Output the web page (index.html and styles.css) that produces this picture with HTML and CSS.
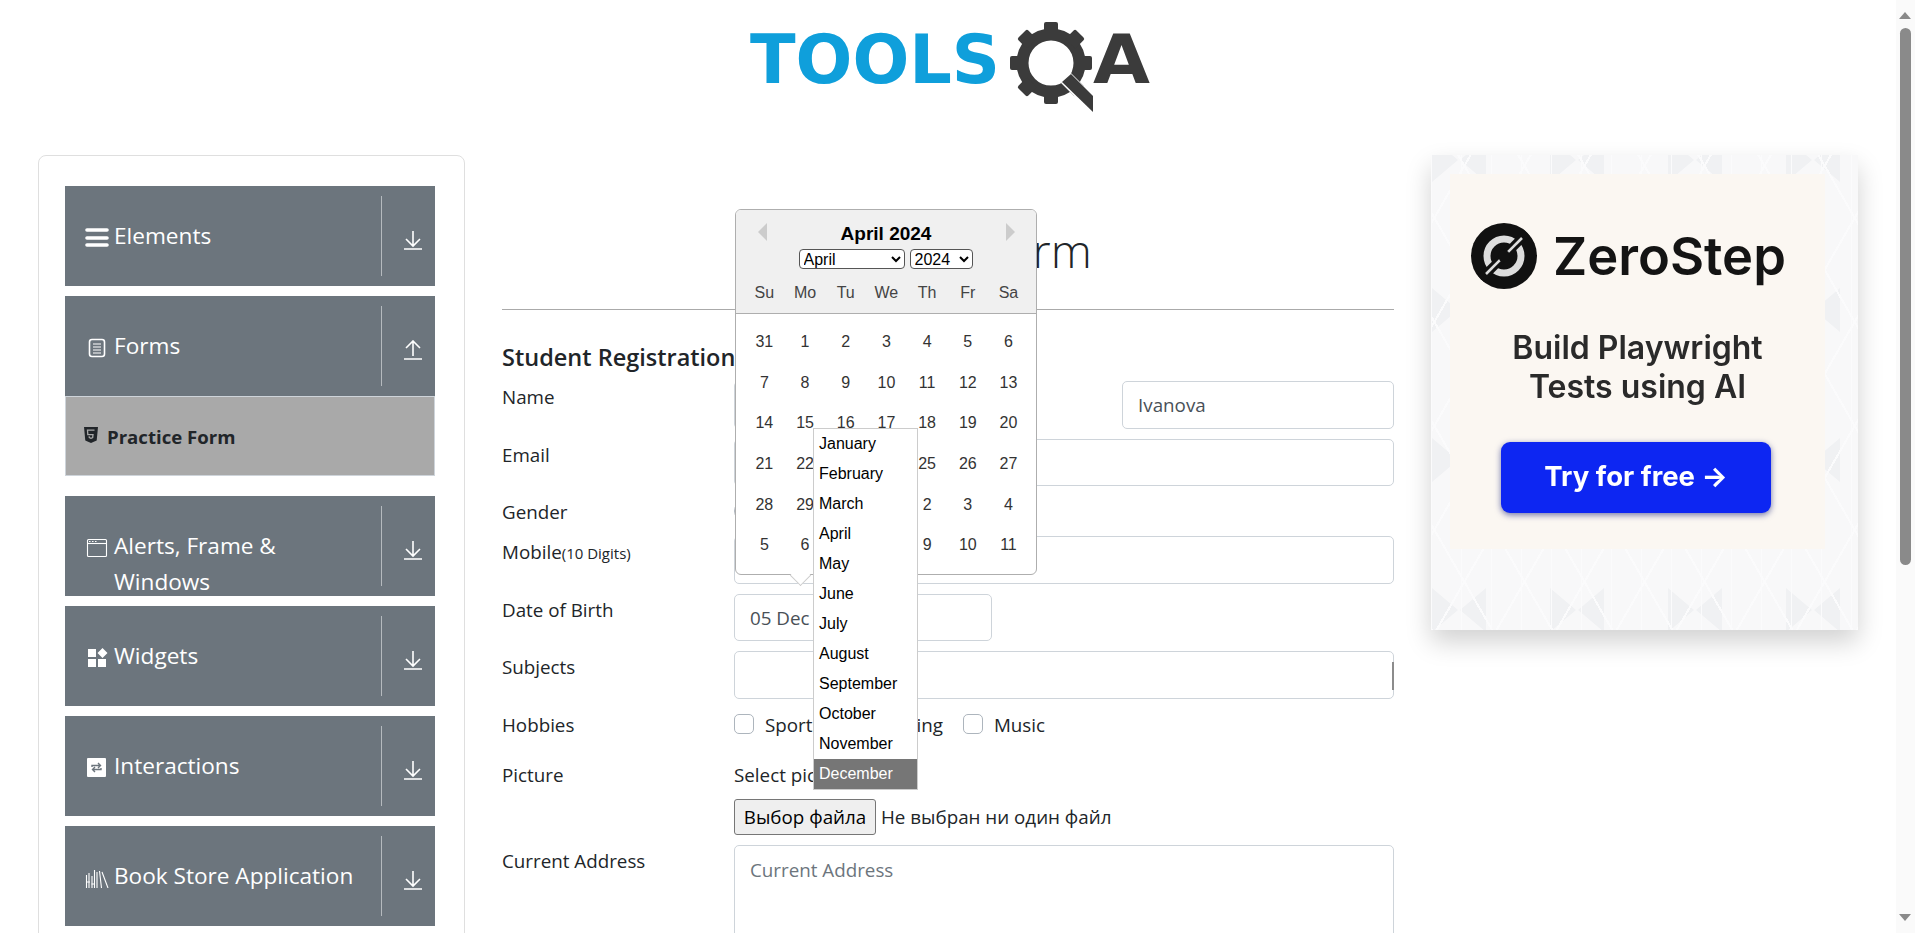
FILE: index.html
```html
<!DOCTYPE html>
<html lang="en">
  <head>
    <meta charset="UTF-8" />
    <meta name="viewport" content="width=device-width, initial-scale=1.0" />
    <title>ToolsQA</title>
    <link rel="stylesheet" href="styles.css">
  </head>
  <body>
    <div class="page">
      <header class="top">
        <svg class="logo" width="496" height="130" viewBox="0 0 496 130">
          <text class="logo-tools" x="50" y="83" textLength="250" lengthAdjust="spacingAndGlyphs">TOOLS</text>
          <g class="gear">
            <circle cx="351" cy="63" r="28.5" />
            <rect x="344" y="22" width="14" height="14" rx="2" />
            <rect x="344" y="22" width="14" height="14" rx="2" transform="rotate(45 351 63)" />
            <rect x="344" y="22" width="14" height="14" rx="2" transform="rotate(90 351 63)" />
            <rect x="344" y="22" width="14" height="14" rx="2" transform="rotate(135 351 63)" />
            <rect x="344" y="22" width="14" height="14" rx="2" transform="rotate(180 351 63)" />
            <rect x="344" y="22" width="14" height="14" rx="2" transform="rotate(225 351 63)" />
            <rect x="344" y="22" width="14" height="14" rx="2" transform="rotate(270 351 63)" />
            <rect x="344" y="22" width="14" height="14" rx="2" transform="rotate(315 351 63)" />
          </g>
          <path class="logo-cut" d="M366 78 L393 105" />
          <path class="logo-handle" d="M371 74 L393 96 L393 112 L362 82 Z" />
          <text class="logo-a" x="393" y="83" textLength="57" lengthAdjust="spacingAndGlyphs">A</text>
        </svg>
      </header>

      <div class="columns">
        <aside class="side">
          <div class="group">
            <div class="group-name">
              <svg class="ico" width="24" height="20" viewBox="0 0 24 20"><path class="ico-line thick" d="M2 2h20M2 10h20M2 17h20" /></svg>
              <span>Elements</span>
            </div>
            <div class="group-arrow"><svg width="18" height="20" viewBox="0 0 18 20"><path class="ico-line" d="M9 1v15M2 9l7 7 7-7M0 19h18" /></svg></div>
          </div>

          <div class="group">
            <div class="group-name">
              <svg class="ico" width="24" height="20" viewBox="0 0 24 20"><rect class="ico-line" x="4.5" y="1.5" width="15" height="17" rx="2.5" /><path class="ico-line thin" d="M8 6h8M8 9h8M8 12h8M8 15h8" /></svg>
              <span>Forms</span>
            </div>
            <div class="group-arrow"><svg width="18" height="20" viewBox="0 0 18 20"><path class="ico-line" d="M9 16V1M2 8l7-7 7 7M0 19h18" /></svg></div>
          </div>
          <div class="sub-item">
            <svg class="ico-sub" width="14" height="16" viewBox="0 0 14 16"><path d="M0 0h14l-1.3 13.6L7 16l-5.700-2.400z" fill="#212529" /><path d="M10.500 3.200H3.500l.3 4.400h5.200l-.3 3L7 11.300l-1.700-.7-.1-1.300" fill="none" stroke="#a9a9a9" stroke-width="1.300" /></svg>
            <span>Practice Form</span>
          </div>

          <div class="group group-after-sub">
            <div class="group-name">
              <svg class="ico" width="24" height="20" viewBox="0 0 24 20"><rect class="ico-line thin" x="2.500" y="1.500" width="19" height="17" rx="1" /><path class="ico-line thin" d="M2.500 5.500h19" /><path class="ico-line thin" d="M4 3.500h1.500M7 3.500h1.500M10 3.500h1.500" /></svg>
              <span>Alerts, Frame &amp; Windows</span>
            </div>
            <div class="group-arrow"><svg width="18" height="20" viewBox="0 0 18 20"><path class="ico-line" d="M9 1v15M2 9l7 7 7-7M0 19h18" /></svg></div>
          </div>

          <div class="group">
            <div class="group-name">
              <svg class="ico" width="24" height="20" viewBox="0 0 24 20"><path fill="#fff" d="M3 1h8v8H3zM3 11h8v8H3zM13 11h8v8h-8zM17.500 0l5 5-5 5-5-5z" /></svg>
              <span>Widgets</span>
            </div>
            <div class="group-arrow"><svg width="18" height="20" viewBox="0 0 18 20"><path class="ico-line" d="M9 1v15M2 9l7 7 7-7M0 19h18" /></svg></div>
          </div>

          <div class="group">
            <div class="group-name">
              <svg class="ico" width="24" height="20" viewBox="0 0 24 20"><rect x="2" y="0" width="19" height="19" rx="1" fill="#fff" /><path d="M7 9V7.500h8M13 5l2.500 2.500L13 10M16 10v1.500H8M10 9l-2.500 2.500L10 14" fill="none" stroke="#6c757d" stroke-width="1.400" /></svg>
              <span>Interactions</span>
            </div>
            <div class="group-arrow"><svg width="18" height="20" viewBox="0 0 18 20"><path class="ico-line" d="M9 1v15M2 9l7 7 7-7M0 19h18" /></svg></div>
          </div>

          <div class="group">
            <div class="group-name">
              <svg class="ico" width="24" height="20" viewBox="0 0 24 20"><path class="ico-line thin" d="M1.500 7v13M4 5v15M7 8v12M9.500 2v18M12 4v16M14.500 3l2 17M17 4l6 16" /><path class="ico-line thin" d="M1 14h4M6.500 16h3.500" /></svg>
              <span>Book Store Application</span>
            </div>
            <div class="group-arrow"><svg width="18" height="20" viewBox="0 0 18 20"><path class="ico-line" d="M9 1v15M2 9l7 7 7-7M0 19h18" /></svg></div>
          </div>
        </aside>

        <main class="main">
          <h1 class="title">Practice Form</h1>
          <hr class="rule" />
          <h5 class="form-title">Student Registration Form</h5>

          <div class="row">
            <label class="row-label">Name</label>
            <div class="row-ctrl split">
              <input class="field field-half" placeholder="First Name" />
              <input class="field field-half" value="Ivanova" />
            </div>
          </div>
          <div class="row">
            <label class="row-label">Email</label>
            <div class="row-ctrl"><input class="field" placeholder="name@example.com" /></div>
          </div>
          <div class="row row-gender">
            <label class="row-label">Gender</label>
            <div class="row-ctrl checks">
              <span class="radio"></span><span>Male</span>
              <span class="radio"></span><span>Female</span>
              <span class="radio"></span><span>Other</span>
            </div>
          </div>
          <div class="row">
            <label class="row-label">Mobile<small>(10 Digits)</small></label>
            <div class="row-ctrl"><input class="field" placeholder="Mobile Number" /></div>
          </div>
          <div class="row">
            <label class="row-label">Date of Birth</label>
            <div class="row-ctrl"><input class="field field-date" value="05 Dec 2024" /></div>
          </div>
          <div class="row">
            <label class="row-label">Subjects</label>
            <div class="row-ctrl subjects"><input class="field" /></div>
          </div>
          <div class="row row-hobbies">
            <label class="row-label">Hobbies</label>
            <div class="row-ctrl checks">
              <span class="check"></span><span>Sports</span>
              <span class="check"></span><span>Reading</span>
              <span class="check"></span><span>Music</span>
            </div>
          </div>
          <div class="row row-picture">
            <label class="row-label">Picture</label>
            <div class="row-ctrl">
              <div class="picture-text">Select picture</div>
              <div class="file-line">
                <button class="file-btn">Выбор файла</button>
                <span class="file-name">Не выбран ни один файл</span>
              </div>
            </div>
          </div>
          <div class="row">
            <label class="row-label">Current Address</label>
            <div class="row-ctrl"><textarea class="field field-area" placeholder="Current Address"></textarea></div>
          </div>

          <div class="cal">
            <div class="cal-head">
              <span class="cal-prev"></span>
              <span class="cal-next"></span>
              <div class="cal-month">April 2024</div>
              <div class="cal-selects">
                <select class="sel-month"><option>April</option></select>
                <select class="sel-year"><option>2024</option></select>
              </div>
              <div class="cal-names">
                <span>Su</span><span>Mo</span><span>Tu</span><span>We</span><span>Th</span><span>Fr</span><span>Sa</span>
              </div>
            </div>
            <div class="cal-days">
              <span>31</span><span>1</span><span>2</span><span>3</span><span>4</span><span>5</span><span>6</span>
              <span>7</span><span>8</span><span>9</span><span>10</span><span>11</span><span>12</span><span>13</span>
              <span>14</span><span>15</span><span>16</span><span>17</span><span>18</span><span>19</span><span>20</span>
              <span>21</span><span>22</span><span>23</span><span>24</span><span>25</span><span>26</span><span>27</span>
              <span>28</span><span>29</span><span>30</span><span>1</span><span>2</span><span>3</span><span>4</span>
              <span>5</span><span>6</span><span>7</span><span>8</span><span>9</span><span>10</span><span>11</span>
            </div>
            <ul class="month-list">
              <li>January</li><li>February</li><li>March</li><li>April</li><li>May</li><li>June</li>
              <li>July</li><li>August</li><li>September</li><li>October</li><li>November</li>
              <li class="picked">December</li>
            </ul>
          </div>
        </main>

        <aside class="ad">
          <div class="ad-inner">
            <div class="ad-brand">
              <svg width="66" height="66" viewBox="0 0 66 66">
                <circle cx="33" cy="33" r="33" fill="#111" />
                <circle cx="33" cy="33" r="17" fill="none" stroke="#ddd" stroke-width="7" />
                <path d="M10 56L56 10" stroke="#111" stroke-width="9" />
                <path d="M15 51L51 15" stroke="#ddd" stroke-width="2.500" />
                <circle cx="33" cy="33" r="6" fill="#111" />
              </svg>
              <span>ZeroStep</span>
            </div>
            <div class="ad-text">Build Playwright<br />Tests using AI</div>
            <div class="ad-btn">Try for free →</div>
          </div>
        </aside>
      </div>
    </div>

    <div class="scroll">
      <span class="scroll-up"></span>
      <span class="scroll-thumb"></span>
      <span class="scroll-down"></span>
    </div>
  </body>
</html>
```

FILE: styles.css
```css
* {
  box-sizing: border-box;
}
html,
body {
  height: 100%;
  margin: 0;
  overflow: hidden;
}
body {
  background: #fff;
  color: #212529;
  font-family: "Open Sans", "Liberation Sans", sans-serif;
  font-size: 18.8px;
  line-height: 27px;
}
.page {
  width: 1896px;
}

/* logo */
.top {
  height: 155px;
  display: flex;
  justify-content: center;
}
.logo-tools {
  font-family: "DejaVu Sans", sans-serif;
  font-weight: 700;
  font-size: 68px;
  fill: #0f9fdb;
}
.logo-a {
  font-family: "DejaVu Sans", sans-serif;
  font-weight: 700;
  font-size: 68px;
  fill: #3b3b3b;
}
.gear circle {
  fill: none;
  stroke: #3b3b3b;
  stroke-width: 12;
}
.gear rect {
  fill: #3b3b3b;
}
.logo-cut {
  stroke: #fff;
  stroke-width: 14;
}
.logo-handle {
  fill: #3b3b3b;
}

.columns {
  display: flex;
  align-items: flex-start;
}

/* left menu */
.side {
  width: 427px;
  margin-left: 38px;
  padding: 30px 30px 30px 26px;
  border: 1px solid #dfdfdf;
  border-radius: 8px;
}
.group {
  display: flex;
  width: 370px;
  height: 100px;
  margin-bottom: 10px;
  background: #6c757d;
  color: #fff;
  overflow: hidden;
}
.group-after-sub {
  margin-top: 20px;
}
.group-name {
  flex: 1;
  display: flex;
  align-items: flex-start;
  padding: 32px 16px 0 20px;
  font-size: 22.6px;
  line-height: 36px;
}
.ico {
  flex: none;
  margin: 10px 5px 0 0;
}
.ico-line {
  fill: none;
  stroke: #fff;
  stroke-width: 1.6;
}
.ico-line.thick {
  stroke-width: 3.6;
  stroke-linecap: round;
}
.ico-line.thin {
  stroke-width: 1.1;
}
.group-arrow {
  flex: none;
  width: 54px;
  height: 80px;
  margin-top: 10px;
  border-left: 1px solid #b5babe;
  display: flex;
  align-items: center;
  justify-content: center;
  padding: 8px 0 0 9px;
}
.sub-item {
  display: flex;
  align-items: center;
  gap: 9px;
  width: 370px;
  height: 80px;
  margin-top: -10px;
  padding-left: 18px;
  background: #a9a9a9;
  border: 1px solid #ced4da;
  color: #212529;
  font-size: 18.6px;
  font-weight: 700;
}
.ico-sub {
  flex: none;
  margin-top: -3px;
}

/* form */
.main {
  position: relative;
  width: 892px;
  margin-left: 37px;
}
.title {
  margin: 55px 0 0;
  font-size: 46.5px;
  font-weight: 300;
  line-height: 80px;
  text-align: center;
}
.rule {
  margin: 19px 0 0;
  border: 0;
  border-top: 1px solid #aaa;
}
.form-title {
  margin: 31px 0 8px;
  font-size: 23.5px;
  font-weight: 600;
  line-height: 32px;
}
.row {
  display: flex;
  margin-bottom: 10px;
}
.row-gender {
  height: 30px;
}
.row-hobbies {
  height: 40px;
}
.row-label {
  flex: none;
  width: 232px;
  padding-top: 3px;
}
.row-label small {
  font-size: 15px;
}
.row-ctrl {
  flex: 1;
}
.split {
  display: flex;
  justify-content: space-between;
}
.field {
  display: block;
  width: 100%;
  height: 47.6px;
  padding: 6px 15px;
  border: 1px solid #ced4da;
  border-radius: 5px;
  background: #fff;
  color: #495057;
  font-family: inherit;
  font-size: 18.8px;
}
.field::placeholder {
  color: #6c757d;
}
.field-half {
  width: 272px;
}
.field-date {
  width: 258px;
}
.field-area {
  height: 120px;
  padding-top: 11px;
  resize: none;
}
.subjects {
  position: relative;
}
.subjects::after {
  content: "";
  position: absolute;
  right: 0;
  top: 11px;
  width: 2px;
  height: 28px;
  background: #8c8c8c;
}
.checks {
  display: flex;
  align-items: flex-start;
  padding-top: 3px;
}
.check,
.radio {
  flex: none;
  width: 20px;
  height: 20px;
  margin: 2px 11px 0 0;
  border: 1px solid #adb5bd;
  border-radius: 5px;
}
.radio {
  border-radius: 50%;
}
.checks span:not(.check):not(.radio) {
  margin-right: 20px;
}
.picture-text {
  padding-top: 3px;
}
.file-line {
  display: flex;
  align-items: center;
  gap: 5px;
  margin-top: 10px;
}
.file-name {
  padding-top: 2px;
}
.file-btn {
  height: 36px;
  width: 142px;
  padding: 0;
  border: 1px solid #767676;
  border-radius: 3px;
  background: #efefef;
  color: #000;
  font-family: inherit;
  font-size: 18.8px;
}
.row-picture {
  margin-bottom: 10px;
}

/* date popup, sits over the form */
.cal {
  position: absolute;
  left: 233px;
  top: 54px;
  width: 302px;
  height: 366px;
  border: 1px solid #aeaeae;
  border-radius: 6px;
  background: #fff;
  color: #000;
  font-family: "Liberation Sans", sans-serif;
  font-size: 16px;
  line-height: 20px;
}
.cal::after {
  content: "";
  position: absolute;
  left: 57px;
  bottom: -9px;
  width: 14px;
  height: 14px;
  background: #fff;
  border-right: 1px solid #ccc;
  border-bottom: 1px solid #ccc;
  transform: rotate(45deg);
}
.cal-head {
  position: relative;
  height: 104px;
  padding-top: 14px;
  background: #f0f0f0;
  border-bottom: 1px solid #aeaeae;
  border-radius: 5px 5px 0 0;
  text-align: center;
}
.cal-prev,
.cal-next {
  position: absolute;
  top: 13px;
  border-top: 9px solid transparent;
  border-bottom: 9px solid transparent;
}
.cal-prev {
  left: 22px;
  border-right: 9px solid #ccc;
}
.cal-next {
  right: 21px;
  border-left: 9px solid #ccc;
}
.cal-month {
  font-size: 19px;
  font-weight: 700;
}
.cal-selects {
  display: flex;
  justify-content: center;
  gap: 5px;
  margin: 5px 0 0 -1px;
}
.cal-selects select {
  height: 20px;
  padding: 0;
  border: 1px solid #555;
  border-radius: 4px;
  background: #fff;
  font-family: inherit;
  font-size: 16px;
}
.sel-month {
  width: 106px;
}
.sel-year {
  width: 63px;
}
.cal-names {
  display: grid;
  grid-template-columns: repeat(7, 40.7px);
  margin: 14px 0 0 8px;
  color: #444;
}
.cal-days {
  display: grid;
  grid-template-columns: repeat(7, 40.7px);
  grid-auto-rows: 40.7px;
  padding: 8px 0 0 8px;
  text-align: center;
}
.cal-days span {
  line-height: 40.7px;
  color: #333;
}
.month-list {
  position: absolute;
  left: 77px;
  top: 218px;
  width: 105px;
  margin: 0;
  padding: 0;
  list-style: none;
  background: #fff;
  border: 1px solid #ccc;
  z-index: 2;
}
.month-list li {
  height: 30px;
  padding-left: 5px;
  line-height: 30px;
}
.month-list .picked {
  background: #767676;
  color: #fff;
}

/* ad */
.ad {
  width: 427px;
  height: 475px;
  margin-left: 37px;
  padding: 19px;
  background-color: #f8f8f9;
  background-image:
    repeating-linear-gradient(60deg, #fbfbfc 0 2px, transparent 2px 52px),
    repeating-linear-gradient(-60deg, #fbfbfc 0 2px, transparent 2px 52px),
    repeating-linear-gradient(90deg, #fbfbfc 0 1px, transparent 1px 30px),
    url("data:image/svg+xml,%3Csvg xmlns='http://www.w3.org/2000/svg' width='118' height='150'%3E%3Cpath fill='%23f0f1f3' d='M27 5L1 -17V27ZM29 5L55 -17V27ZM27 155L1 133V177ZM29 155L55 133V177Z'/%3E%3C/svg%3E");
  box-shadow: 0 12px 24px rgba(0, 0, 0, 0.18);
  font-family: Inter, "Liberation Sans", sans-serif;
}
.ad-inner {
  width: 375px;
  height: 375px;
  padding-top: 49px;
  background: #fbf7f2;
  display: flex;
  flex-direction: column;
  align-items: center;
  filter: blur(0.5px);
}
.ad-brand {
  align-self: flex-start;
  display: flex;
  align-items: center;
  gap: 16px;
  margin-left: 21px;
  color: #141414;
  font-size: 52.5px;
  font-weight: 600;
  line-height: 66px;
}
.ad-text {
  margin-top: 39px;
  color: #2a2a2a;
  font-size: 32px;
  font-weight: 600;
  line-height: 39px;
  text-align: center;
}
.ad-btn {
  width: 270px;
  height: 71px;
  margin: 36px 3px 0 0;
  border-radius: 9px;
  background: #0d26f2;
  box-shadow: 0 2px 6px rgba(20, 30, 120, 0.6);
  color: #fff;
  font-size: 27.5px;
  font-weight: 700;
  line-height: 69px;
  text-align: center;
}

/* scrollbar of the window */
.scroll {
  position: fixed;
  top: 0;
  right: 0;
  width: 19px;
  height: 100%;
  background: #fafafa;
}
.scroll-thumb {
  position: absolute;
  left: 4px;
  top: 28px;
  width: 11px;
  height: 537px;
  border-radius: 6px;
  background: #8a8a8a;
}
.scroll-up,
.scroll-down {
  position: absolute;
  left: 3px;
  border-left: 6.5px solid transparent;
  border-right: 6.5px solid transparent;
}
.scroll-up {
  top: 12px;
  border-bottom: 7px solid #8a8a8a;
}
.scroll-down {
  top: 914px;
  border-top: 7px solid #8a8a8a;
}
```
